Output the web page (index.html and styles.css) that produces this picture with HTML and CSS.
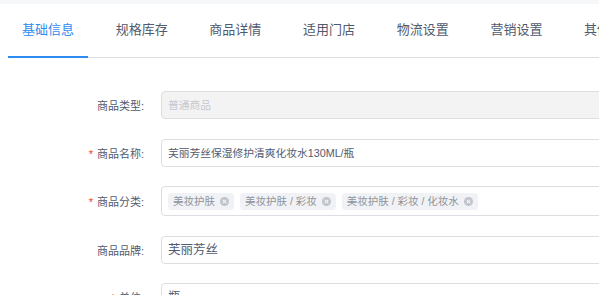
FILE: index.html
```html
<!DOCTYPE html>
<html lang="zh-CN">
<head>
    <meta charset="UTF-8">
    <meta name="viewport" content="width=device-width, initial-scale=1.0">
    <title>商品编辑</title>
    <link rel="stylesheet" href="styles.css">
</head>
<body>

    <div class="topbar"></div>

    <div class="tabs">
        <div class="tab active">基础信息</div>
        <div class="tab">规格库存</div>
        <div class="tab">商品详情</div>
        <div class="tab">适用门店</div>
        <div class="tab">物流设置</div>
        <div class="tab">营销设置</div>
        <div class="tab">其他设置</div>
    </div>

    <div class="form">
        <div class="form-item">
            <label class="form-label">商品类型:</label>
            <div class="input disabled"><span class="placeholder">普通商品</span></div>
        </div>

        <div class="form-item">
            <label class="form-label"><span class="req">*</span>商品名称:</label>
            <div class="input">芙丽芳丝保湿修护清爽化妆水130ML/瓶</div>
        </div>

        <div class="form-item">
            <label class="form-label"><span class="req">*</span>商品分类:</label>
            <div class="input tags">
                <span class="tag">美妆护肤<i class="tag-close"></i></span>
                <span class="tag">美妆护肤 / 彩妆<i class="tag-close"></i></span>
                <span class="tag">美妆护肤 / 彩妆 / 化妆水<i class="tag-close"></i></span>
            </div>
        </div>

        <div class="form-item">
            <label class="form-label">商品品牌:</label>
            <div class="input big">芙丽芳丝</div>
        </div>

        <div class="form-item">
            <label class="form-label"><span class="req">*</span>单位:</label>
            <div class="input big">瓶</div>
        </div>
    </div>

</body>
</html>
```

FILE: styles.css
```css
body {
    font-family: "Liberation Sans", "Noto Sans CJK SC", sans-serif;
    background-color: #fff;
    color: #515a6e;
    margin: 0;
    padding: 0;
    overflow: hidden;
}
.topbar {
    height: 4px;
    background-color: #f5f7f9;
}
.tabs {
    display: flex;
    gap: 13.7px;
    margin-left: 8px;
    height: 54px;
    border-bottom: 1px solid #dcdee2;
    box-sizing: border-box;
}
.tab {
    position: relative;
    flex: 0 0 80px;
    text-align: center;
    line-height: 51px;
    font-size: 13px;
    white-space: nowrap;
}
.tab.active {
    color: #2d8cf0;
}
.tab.active::after {
    content: "";
    position: absolute;
    left: 0;
    right: 0;
    bottom: -1px;
    height: 2px;
    background-color: #2d8cf0;
}
.form {
    padding-top: 33px;
}
.form-item {
    display: flex;
    align-items: center;
    margin-bottom: 19.5px;
}
.form-label {
    flex: 0 0 161px;
    box-sizing: border-box;
    padding-right: 17px;
    text-align: right;
    font-size: 11px;
    color: #515a6e;
}
.req {
    color: #ed4014;
    margin-right: 4px;
}
.input {
    flex: 0 0 520px;
    box-sizing: border-box;
    height: 28px;
    line-height: 26px;
    padding: 0 6px;
    border: 1px solid #dcdee2;
    border-radius: 4px;
    font-size: 10.75px;
    color: #515a6e;
    white-space: nowrap;
}
.input.disabled {
    background-color: #f3f3f3;
}
.placeholder {
    color: #c5c8ce;
}
.input.big {
    font-size: 12.5px;
}
.input.tags {
    height: 30px;
    display: flex;
    align-items: center;
    gap: 6px;
    padding-left: 6px;
}
.tag {
    display: inline-flex;
    align-items: center;
    gap: 5px;
    height: 17px;
    padding: 0 5px;
    background-color: #f0f2f5;
    border-radius: 4px;
    font-size: 10.5px;
    color: #909399;
}
.tag-close {
    position: relative;
    width: 9px;
    height: 9px;
    border-radius: 50%;
    background-color: #c0c4cc;
}
.tag-close::before,
.tag-close::after {
    content: "";
    position: absolute;
    left: 4px;
    top: 2px;
    width: 1px;
    height: 5px;
    background-color: #fff;
    transform: rotate(45deg);
}
.tag-close::after {
    transform: rotate(-45deg);
}
```
